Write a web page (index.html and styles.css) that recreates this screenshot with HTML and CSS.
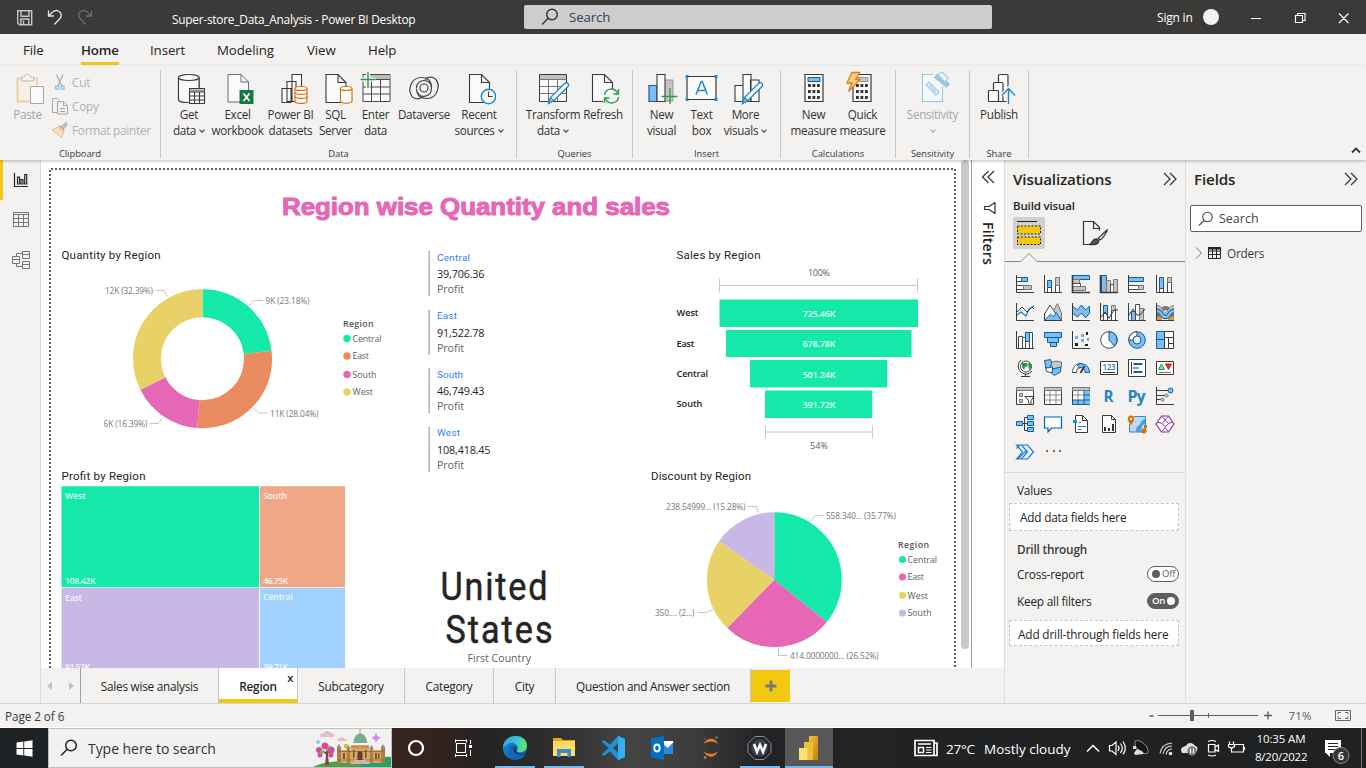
FILE: index.html
```html
<!DOCTYPE html>
<html lang="en">
<head>
<meta charset="utf-8">
<title>Super-store_Data_Analysis - Power BI Desktop</title>
<link rel="stylesheet" href="styles.css">
</head>
<body>
<div class="app">

<header class="titlebar">
  <svg class="quick" viewBox="0 0 110 34" width="110" height="34" fill="none" stroke="#fff">
    <g stroke="#c8c6c4" stroke-width="1.4"><path d="M17.700 10.700h14v14h-12.300l-1.700-1.700z"/><path d="M21 10.700v5.500h8v-5.500M20.800 24.500v-5.500h8v5.500M23.500 20.500v3.500"/></g>
    <path d="M48.500 10.500v5.500h5.500M48.700 15.800l4-3.800c3-2.400 6-1.700 7.600.5 1.700 2.500 1 4.800-1 6.800l-5 5.200" stroke="#e6e6e6" stroke-width="1.300"/>
    <path d="M91.500 10.500v5.500h-5.500M91.300 15.800l-4-3.800c-3-2.400-6-1.700-7.600.5-1.700 2.500-1 4.800 1 6.800l5 5.200" stroke="#6f6e6c" stroke-width="1.300"/>
  </svg>
  <div class="doc-title">Super-store_Data_Analysis - Power BI Desktop</div>
  <div class="top-search">
    <svg width="18" height="18" viewBox="0 0 18 18" fill="none" stroke="#333" stroke-width="1.400"><circle cx="11" cy="6.500" r="5.300"/><path d="M7.200 10.300L1 16.500"/></svg>
    <span>Search</span>
  </div>
  <div class="sign">Sign in</div>
  <div class="avatar"></div>
  <svg class="win" viewBox="1240 0 126 34" width="126" height="34" fill="none" stroke="#fff" stroke-width="1.100"><path d="M1251 18.500h10M1295.500 15.500h7v7h-7zM1297.500 15.500v-2h7.500v7h-2.500M1339 13.500l9.500 9.500M1348.500 13.500l-9.500 9.500"/></svg>
</header>

<nav class="menu">
  <span class="m-file">File</span><span class="m-home">Home</span><span class="m-insert">Insert</span><span class="m-model">Modeling</span><span class="m-view">View</span><span class="m-help">Help</span>
</nav>

<section class="ribbon">
  <div class="group g-clip">
    <div class="clip">
      <div class="btn off w-paste">
        <svg class="ico" viewBox="11 71 34 35"><g fill="none"><path d="M30 101.500H17.500v-23H37V85" stroke="#f0c896" stroke-width="1.600" fill="#f8f0e4"/><path d="M21.500 81v-4h3c.5-3.500 5.500-3.500 6 0h3v4z" stroke="#bbb9b7" fill="#f5f4f3"/><path d="M30.500 86.500h13v17h-13z" stroke="#a9a7a5" fill="#fafafa"/></g></svg>
        <span>Paste</span>
      </div>
      <ul class="clip-list">
        <li><svg viewBox="51 73 18 18"><g fill="none" stroke="#aeacaa" stroke-width="1.200"><path d="M56.500 74.500l5.500 12M63 74.500l-5.500 12"/></g><g fill="none" stroke="#98c4e0" stroke-width="1.500"><rect x="55.500" y="86" width="3" height="3"/><rect x="61" y="86" width="3" height="3"/></g></svg>Cut</li>
        <li><svg viewBox="51 97 18 18" fill="none" stroke="#a9a7a5"><path d="M57 112.500h-4.500v-14h5l2 2M57.500 101.500h6l4 4v8.500h-10zM63.500 101.500v4h4M60 108.500h5M60 111.500h5"/></svg>Copy</li>
        <li><svg viewBox="51 121 18 18"><path d="M52 130l6-3 6 5-3 5.500-2-2z" fill="#fadfc0" stroke="#e6b88e"/><path d="M59 125.500l5.500 5M61 127.500l5.500-5M62.500 129l5-5" stroke="#a9a7a5" fill="none" stroke-width="1.300"/></svg>Format painter</li>
      </ul>
    </div>
    <div class="glabel">Clipboard</div>
  </div>

  <div class="group g-data">
    <div class="btns">
      <div class="btn w48">
        <svg class="ico" viewBox="172 71 34 35" fill="#fafafa" stroke="#3b3a39" stroke-width="1.100"><path d="M178.500 77.500v22c0 1.800 4 3 10 3M199 88v-10.500"/><path d="M178.500 77.500v22c0 2 4 3 10 3h1V88h9.500V77.500" stroke="none"/><path d="M178.500 77.500v22c0 1.800 4 3 10 3M199 88v-10.500" fill="none"/><ellipse cx="188.800" cy="77.500" rx="10.300" ry="3"/><path d="M189.500 88.500h15v15h-15z"/><path d="M189.500 89.500h15v2h-15z" fill="#9a9896" stroke="none"/><path d="M189.500 92h15M189.500 96h15M189.500 100h15M194.500 92v11.500M199.500 92v11.500" fill="none"/></svg>
        <span>Get</span><span>data<i class="chev"></i></span></div>
      <div class="btn w49">
        <svg class="ico" viewBox="220.500 71 34 35"><path d="M227.500 74.500h13l7.500 7.500v20h-20.500z" fill="#fafafa" stroke="#6f6d6b"/><path d="M240.500 74.500v7.500h7.500" fill="none" stroke="#6f6d6b"/><path d="M239 90h14v14h-14z" fill="#107c41"/><path d="M243 93.500l6 7.500M249 93.500l-6 7.500" stroke="#fff" stroke-width="1.800"/></svg>
        <span>Excel</span><span>workbook</span></div>
      <div class="btn w57">
        <svg class="ico" viewBox="273.500 71 34 35" fill="#fafafa" stroke="#3b3a39" stroke-width="1.100"><path d="M291.500 74.500h9.500v27h-9.500zM286.500 81.500h9v20h-9zM281.500 88.500h9v14h-9z"/><path d="M294.500 88.500v13c0 2.500 12 2.500 12 0v-13" stroke="#d86c00"/><ellipse cx="300.500" cy="88.500" rx="6" ry="2" stroke="#d86c00"/><path d="M294.500 92.500c0 2.500 12 2.500 12 0M294.500 96.500c0 2.500 12 2.500 12 0" stroke="#d86c00" fill="none"/></svg>
        <span>Power BI</span><span>datasets</span></div>
      <div class="btn w33">
        <svg class="ico" viewBox="318.500 71 34 35" fill="#fafafa" stroke="#3b3a39" stroke-width="1.100"><path d="M325.500 74.500h12l8 8v20h-20zM337.500 74.500v8h8"/><path d="M340 88.500v12.500c0 3 11.500 3 11.500 0v-12.500" stroke="#d86c00"/><ellipse cx="345.700" cy="88.500" rx="5.800" ry="2" stroke="#d86c00"/></svg>
        <span>SQL</span><span>Server</span></div>
      <div class="btn w47">
        <svg class="ico" viewBox="358.500 71 34 35" fill="#fafafa" stroke="#4b4a49"><path d="M362.500 74.500h27v27h-27z"/><path d="M370 75h19.500v4h-19.500z" fill="#bdbbb9" stroke="none"/><path d="M362.500 87h27M362.500 94h27M371 79.500v22M380 79.500v22M370 79.500h19.500" fill="none"/><path d="M367.500 72v16M360 79.500h15" stroke="#f3f2f1" stroke-width="4"/><path d="M367.500 72v16M360 79.500h15" stroke="#2c9a4a" stroke-width="1.400"/></svg>
        <span>Enter</span><span>data</span></div>
      <div class="btn w50">
        <svg class="ico" viewBox="407 71 34 35" fill="none" stroke="#444" stroke-width="1.200"><ellipse cx="424" cy="88" rx="4" ry="4"/><path d="M416.500 88c0-10 15-10 15 0s-12 10.500-14 4M413 97.500c-6-6-3-19.500 8-20 6-.3 10.500 3 10.500 10M413 97.500c4 2 8 1 10-1"/><path d="M435 78.500c6 6 3 19.500-8 20-6 .3-10.500-3-10.500-10M435 78.500c-4-2-8-1-10 1"/></svg>
        <span>Dataverse</span></div>
      <div class="btn w60">
        <svg class="ico" viewBox="462 71 34 35" fill="#fafafa" stroke="#3b3a39" stroke-width="1.100"><path d="M469.500 74.500h12l8 8v20h-20zM481.500 74.500v8h8"/><circle cx="488.500" cy="96.500" r="7.200" stroke="#1f86cc" stroke-width="1.400"/><path d="M488.500 91.500v5h4" fill="none"/></svg>
        <span>Recent</span><span>sources<i class="chev"></i></span></div>
    </div>
    <div class="glabel">Data</div>
  </div>

  <div class="group g-query">
    <div class="btns">
      <div class="btn w54">
        <svg class="ico" viewBox="536 71 34 35" fill="#fafafa" stroke="#3b3a39"><path d="M539.500 74.500h27v27h-27z"/><path d="M540 75h26v4h-26z" fill="#c3c1bf" stroke="none"/><path d="M539.500 79.500h27M539.500 86.500h27M539.500 93.500h27M548.500 79.500v22M557.500 79.500v22" fill="none" stroke="#777"/><path d="M548.500 103.500l2-6 14-14c3-2 5 1 3.500 3l-14 14z" stroke="#1f86cc" stroke-width="1.300"/><path d="M548.500 103.500l2-6 3.500 3z" fill="#83bcea" stroke="#1f86cc"/></svg>
        <span>Transform</span><span>data<i class="chev"></i></span></div>
      <div class="btn w46">
        <svg class="ico" viewBox="586 71 34 35" fill="#fafafa" stroke="#3b3a39" stroke-width="1.100"><path d="M603 101.500h-10.500v-27h12l8 8v7M604.500 74.500v8h8"/><path d="M604.500 95c1-7 10-8 13-2M618.500 89v5h-5M618.500 97c-1 7-10 8-13 2M604.500 103v-5h5" fill="none" stroke="#2c9a4a" stroke-width="1.400"/></svg>
        <span>Refresh</span></div>
    </div>
    <div class="glabel">Queries</div>
  </div>

  <div class="group g-insert">
    <div class="btns">
      <div class="btn w41">
        <svg class="ico" viewBox="644.500 71 34 35"><path d="M664 80h8.500v21H664z" fill="#c8c6c4" stroke="#979593"/><path d="M648.500 85.500h8v16h-8z" fill="#83bcea" stroke="#0063b1" stroke-width="1.200"/><path d="M656.500 74.500h8v27h-8z" fill="#fafafa" stroke="#3b3a39" stroke-width="1.100"/><path d="M669.500 88v16M661 96.500h16" stroke="#2c9a4a" stroke-width="1.300"/></svg>
        <span>New</span><span>visual</span></div>
      <div class="btn w39">
        <svg class="ico" viewBox="684.500 71 34 35"><path d="M686.500 76.500h29v23h-29z" fill="#fafafa" stroke="#3b3a39" stroke-width="1.200"/><path d="M685 75h3v3h-3zM714 75h3v3h-3zM685 98h3v3h-3zM714 98h3v3h-3z" fill="#1490df"/><path d="M695.500 94.500l5.200-13h1l5.200 13M697.500 90.500h7.500" fill="none" stroke="#1f86cc" stroke-width="1.500"/></svg>
        <span>Text</span><span>box</span></div>
      <div class="btn w49">
        <svg class="ico" viewBox="728.500 71 34 35" fill="#fafafa" stroke="#3b3a39" stroke-width="1.100"><path d="M734.500 85.500h8v16h-8zM750 80h8.500v21.500H750zM742.500 74.500h8v27h-8z"/><path d="M742 103.500l2-6 14-14c3-2 5.500 1 3.500 3l-14 14z" stroke="#1f86cc" stroke-width="1.300"/><path d="M742 103.500l2-6 3.500 3z" fill="#83bcea" stroke="#1f86cc"/></svg>
        <span>More</span><span>visuals<i class="chev"></i></span></div>
    </div>
    <div class="glabel">Insert</div>
  </div>

  <div class="group g-calc">
    <div class="btns">
      <div class="btn w49">
        <svg class="ico" viewBox="796.500 71 34 35"><path d="M804.500 74.500h18v27h-18z" fill="#fafafa" stroke="#3b3a39" stroke-width="1.200"/><path d="M807.500 77.500h12v4h-12z" fill="#83bcea" stroke="#0063b1"/><path d="M807.500 85.500h12M807.500 91.500h12M807.500 97.500h12" stroke="#333" stroke-width="3" stroke-dasharray="2.800 1.700"/></svg>
        <span>New</span><span>measure</span></div>
      <div class="btn w49">
        <svg class="ico" viewBox="845.500 71 34 35"><path d="M852.500 74.500h18v27h-18z" fill="#fafafa" stroke="#3b3a39" stroke-width="1.200"/><path d="M857 77.500h10.500v4H857z" fill="#c8c6c4" stroke="#979593"/><path d="M855.500 85.500h12M855.500 91.500h12M855.500 97.500h12" stroke="#333" stroke-width="3" stroke-dasharray="2.800 1.700"/><path d="M851.500 72.500h7.500l-4 7h4.500l-11.500 12 3.500-8.500h-5z" fill="#ffd27a" stroke="#e07b1a" stroke-width="1.300"/></svg>
        <span>Quick</span><span>measure</span></div>
    </div>
    <div class="glabel">Calculations</div>
  </div>

  <div class="group g-sens">
    <div class="btns">
      <div class="btn off w73">
        <svg class="ico" viewBox="915 71 34 35" fill="none" stroke="#9cc7e2" stroke-width="1.100"><path d="M932 74.500h-10.500v27h20v-15" fill="#f3f8fb"/><path d="M925 85l3-3 10 10-3 3zM928 85l7 7" /><path d="M933.500 77.500l3-3.500 12 10-3 3z" fill="#9cc7e2"/><path d="M937 75l4-3 6 6-3 4z" fill="#f3f8fb"/></svg>
        <span>Sensitivity</span><span><i class="chev solo"></i></span></div>
    </div>
    <div class="glabel">Sensitivity</div>
  </div>

  <div class="group g-share">
    <div class="btns">
      <div class="btn w58">
        <svg class="ico" viewBox="982 71 34 35" fill="#fafafa" stroke="#3b3a39" stroke-width="1.200"><path d="M998.500 101.500V75.500q0-1 1-1h7.500q1 0 1 1V101.500z"/><path d="M993.500 101.500V83.500q0-1 1-1h7.500q1 0 1 1V101.500z"/><path d="M988.500 100.500V91.500q0-1 1-1h8q1 0 1 1V101.500h-9q-1 0-1-1"/><path d="M1008.500 104V89M1002 95.500l6.500-7 6.500 7" fill="none" stroke="#f3f2f1" stroke-width="4"/><path d="M1008.500 104V89M1002 95.500l6.500-7 6.500 7" fill="none" stroke="#1f86cc" stroke-width="1.400"/></svg>
        <span>Publish</span></div>
    </div>
    <div class="glabel">Share</div>
  </div>
  <svg class="collapse" width="10" height="7" viewBox="0 0 10 7"><path d="M1 5.500l4-4 4 4" fill="none" stroke="#333" stroke-width="1.800"/></svg>
</section>

<main class="main">
  <aside class="rail">
    <svg width="41" height="125" viewBox="0 160 41 125" fill="none">
      <path d="M0 160h3v40H0z" fill="#f2c811"/>
      <path d="M14.500 173v13.500H28M17.500 177h2v7h-2zM21 179.500h2v4.500h-2zM24.700 174.500h2v9.500h-2z" stroke="#252423" stroke-width="1.200"/>
      <path d="M13.500 212.500h15v14h-15zM13.500 214.500h15M13.500 218.500h15M13.500 222.500h15M18.500 214.500v12M23.500 214.500v12" stroke="#777573"/>
      <path d="M12.500 256.500h7v7h-7zM12.500 259.500h7M22.500 251.500h7v7h-7zM22.500 254.500h7M22.500 261.500h7v7h-7zM22.500 264.500h7M16.500 256.500v-3h6M16.500 263.500v3h6" stroke="#777573"/>
    </svg>
  </aside>

  <div class="stage">
    <div class="stage-top">
      <div class="canvas">
        <svg class="report" width="920" height="508" viewBox="41 160 920 508">
          <path d="M50 668V169H955V668" fill="none" stroke="#605e5c" stroke-width="2" stroke-dasharray="2 2"/>
          <text class="headline" x="282" y="215" textLength="388" lengthAdjust="spacingAndGlyphs">Region wise Quantity and sales</text>

          <g class="v-title">
            <text x="61.500" y="259" textLength="99">Quantity by Region</text>
            <text x="676.500" y="259" textLength="84">Sales by Region</text>
            <text x="61.500" y="480" textLength="84">Profit by Region</text>
            <text x="651" y="480" textLength="100">Discount by Region</text>
          </g>

          <g transform="rotate(-90 202.500 358.700)" fill="none" stroke-width="28">
            <circle cx="202.500" cy="358.700" r="55.500" pathLength="100" stroke="#15e9aa" stroke-dasharray="23.18 100"/>
            <circle cx="202.500" cy="358.700" r="55.500" pathLength="100" stroke="#ea8a5f" stroke-dasharray="28.04 100" stroke-dashoffset="-23.18"/>
            <circle cx="202.500" cy="358.700" r="55.500" pathLength="100" stroke="#e667b6" stroke-dasharray="16.39 100" stroke-dashoffset="-51.22"/>
            <circle cx="202.500" cy="358.700" r="55.500" pathLength="100" stroke="#e8d166" stroke-dasharray="32.39 100" stroke-dashoffset="-67.61"/>
          </g>
          <path class="lead" d="M156 290.500h8l3.500 6M249.500 305.500l4.500-5h9M253.500 408l5 5h9M150 423.500h8.500l4-6"/>
          <g class="detail">
            <text x="105" y="294" textLength="48">12K (32.39%)</text>
            <text x="265.500" y="304" textLength="44">9K (23.18%)</text>
            <text x="270" y="417" textLength="48.500">11K (28.04%)</text>
            <text x="103.500" y="427" textLength="44">6K (16.39%)</text>
          </g>
          <g class="legend">
            <text class="lt" x="343" y="327" textLength="30.500">Region</text>
            <circle cx="347" cy="338.500" r="3.700" fill="#15e9aa"/><text x="352.500" y="342" textLength="29">Central</text>
            <circle cx="347" cy="356" r="3.700" fill="#ea8a5f"/><text x="352.500" y="359" textLength="16.500">East</text>
            <circle cx="347" cy="374.500" r="3.700" fill="#e667b6"/><text x="352.500" y="378" textLength="24">South</text>
            <circle cx="347" cy="392" r="3.700" fill="#e8d166"/><text x="352.500" y="395" textLength="20.500">West</text>
          </g>

          <path d="M429.200 251v45M429.200 310v45M429.200 368v45M429.200 427v45" stroke="#b5b5b5" stroke-width="1.600"/>
          <g class="c-name"><text x="437" y="261" textLength="33">Central</text><text x="437" y="319" textLength="20">East</text><text x="437" y="378" textLength="26">South</text><text x="437" y="436" textLength="23">West</text></g>
          <g class="c-val"><text x="437" y="278" textLength="47.500">39,706.36</text><text x="437" y="337" textLength="47.500">91,522.78</text><text x="437" y="395" textLength="47.500">46,749.43</text><text x="437" y="454" textLength="53.500">108,418.45</text></g>
          <g class="c-sub"><text x="437" y="293" textLength="27">Profit</text><text x="437" y="352" textLength="27">Profit</text><text x="437" y="410" textLength="27">Profit</text><text x="437" y="469" textLength="27">Profit</text></g>

          <g class="f-pct"><text x="808" y="276" textLength="22">100%</text><text x="810" y="449" textLength="18">54%</text></g>
          <path d="M719.500 278.500v14M917.500 278.500v14M719.500 285.500h198M765.500 425.500v13M872.500 425.500v13M765.500 432h107" stroke="#c8c8c8" fill="none"/>
          <g fill="#15e9aa"><rect x="719.500" y="299.500" width="198.500" height="27.500"/><rect x="726" y="330" width="185.500" height="27"/><rect x="750" y="360" width="137.200" height="27.500"/><rect x="765" y="390.500" width="107.200" height="27.500"/></g>
          <g class="f-name"><text x="676.500" y="316" textLength="22">West</text><text x="676.500" y="347" textLength="18">East</text><text x="676.500" y="377" textLength="31.500">Central</text><text x="676.500" y="407" textLength="26">South</text></g>
          <g class="f-val"><text x="802.500" y="317" textLength="33">725.46K</text><text x="802.500" y="347" textLength="33">678.78K</text><text x="802.500" y="378" textLength="33">501.24K</text><text x="802.500" y="408" textLength="33">391.72K</text></g>

          <g><path d="M61.500 486.300h197.500v101H61.500z" fill="#15e9aa"/><path d="M260 486.300h85v101h-85z" fill="#efa787"/><path d="M61.500 588h197.500v90H61.500z" fill="#c7b8e6"/><path d="M260 588h85v90h-85z" fill="#a0d1ff"/></g>
          <g class="t-lab"><text x="65" y="499" textLength="21">West</text><text x="263" y="499" textLength="24">South</text><text x="65" y="601" textLength="17">East</text><text x="263" y="600" textLength="30">Central</text><text x="65" y="584" textLength="30.500">108.42K</text><text x="263" y="584" textLength="25">46.75K</text><text x="65" y="670" textLength="25">91.52K</text><text x="263" y="670" textLength="25">39.71K</text></g>

          <g class="big"><text transform="translate(440.500 600) scale(.9 1)" textLength="119">United</text><text transform="translate(445.500 643) scale(.9 1)" textLength="119">States</text></g>
          <text class="big-sub" x="467.500" y="662" textLength="63.500">First Country</text>

          <g transform="rotate(-90 774.300 579.700)" fill="none" stroke-width="67.400">
            <circle cx="774.300" cy="579.700" r="33.700" pathLength="100" stroke="#15e9aa" stroke-dasharray="35.77 100"/>
            <circle cx="774.300" cy="579.700" r="33.700" pathLength="100" stroke="#e667b6" stroke-dasharray="26.52 100" stroke-dashoffset="-35.77"/>
            <circle cx="774.300" cy="579.700" r="33.700" pathLength="100" stroke="#e8d166" stroke-dasharray="22.43 100" stroke-dashoffset="-62.29"/>
            <circle cx="774.300" cy="579.700" r="33.700" pathLength="100" stroke="#c7b8e6" stroke-dasharray="15.28 100" stroke-dashoffset="-84.72"/>
          </g>
          <path class="lead" d="M747.500 506.500h9l1.500 6M811 521.500l4-6h8.500M697.500 612.500h8.500l7-3M778.500 648.500v7h9"/>
          <g class="detail">
            <text x="666" y="510" textLength="79.500">238.54999... (15.28%)</text>
            <text x="826" y="519" textLength="70">558.340... (35.77%)</text>
            <text x="655" y="616" textLength="39.500">350.... (2...)</text>
            <text x="790" y="659" textLength="88.500">414.0000000... (26.52%)</text>
          </g>
          <g class="legend">
            <text class="lt" x="898" y="548" textLength="31">Region</text>
            <circle cx="902.500" cy="559.500" r="3.600" fill="#15e9aa"/><text x="907.500" y="563" textLength="29.500">Central</text>
            <circle cx="902.500" cy="577" r="3.600" fill="#e667b6"/><text x="907.500" y="580" textLength="16.500">East</text>
            <circle cx="902.500" cy="595.300" r="3.600" fill="#e8d166"/><text x="907.500" y="599" textLength="20.500">West</text>
            <circle cx="902.500" cy="613" r="3.600" fill="#c7b8e6"/><text x="907.500" y="616" textLength="24">South</text>
          </g>
        </svg>
        <div class="scroll"><div class="thumb"></div></div>
      </div>
      <aside class="filters">
        <svg width="16" height="56" viewBox="0 0 16 56" fill="none" stroke="#333" stroke-width="1.200"><path d="M8.500 11l-6 6 6 6M14 11l-6 6 6 6"/><path d="M15 42.500v11l-6-4H4.500v-3H9z" stroke-linejoin="round"/></svg>
        <div class="f-title">Filters</div>
      </aside>
    </div>
    <div class="tabs">
      <div class="arrows"><i class="al"></i><i class="ar"></i></div>
      <div class="tab t1">Sales wise analysis</div>
      <div class="tab t2 active">Region<b>x</b></div>
      <div class="tab t3">Subcategory</div>
      <div class="tab t4">Category</div>
      <div class="tab t5">City</div>
      <div class="tab t6">Question and Answer section</div>
      <div class="add"><svg width="12" height="12" viewBox="0 0 12 12"><path d="M6 .5v11M.5 6h11" stroke="#7a7778" stroke-width="3"/></svg></div>
    </div>
  </div>

  <aside class="viz">
    <div class="pane-head"><span>Visualizations</span><svg width="14" height="14" viewBox="0 0 14 14" fill="none" stroke="#333" stroke-width="1.200"><path d="M1 1l6 6-6 6M7 1l6 6-6 6"/></svg></div>
    <div class="build">Build visual</div>
    <div class="modes">
      <div class="mode on"><svg width="32" height="32" viewBox="1013 217 32 32"><path d="M1017 221.500h20" stroke="#222"/><path d="M1017.500 226h23v8h-23zM1017.500 237h23v7.500h-23z" fill="#f2c811" stroke="#222" stroke-dasharray="2 1.500"/></svg></div>
      <div class="mode"><svg width="32" height="32" viewBox="1077 217 32 32" fill="none" stroke="#333" stroke-width="1.200"><path d="M1089 244.500h-5.500v-23h10l6 6v3M1093.500 221.500v7h6"/><path d="M1107 230l-8.500 8 1.500 2c3-2 5-5 7-9z" fill="#fff"/><path d="M1089 244.500c4-1 3-5 6-5.500s5 2 3 4-5 2-9 1.500z" fill="#555"/></svg></div>
    </div>
    <svg class="notch" width="180" height="9" viewBox="0 0 180 9" fill="none" stroke="#8a8886"><path d="M0 8.500h16l8-8 8 8h148"/></svg>
    <div class="icons">
      <!-- bar and column charts -->
      <svg viewBox="0 0 18 18"><path class="w" d="M.5 2.500h5v4h-5zM.500 10.500h7v4h-7z"/><path class="b" d="M5.500 2.500h6v4h-6z"/><path class="g" d="M7.500 10.500h8v4h-8z"/><path class="a" d="M.500 0v17.500H18"/></svg>
      <svg viewBox="0 0 18 18"><path class="w" d="M3.500 12.500h4v5h-4zM11.500 10.500h4v7h-4z"/><path class="b" d="M3.500 5.500h4v7h-4z"/><path class="g" d="M11.500 2.500h4v8h-4z"/><path class="a" d="M.500 0v17.500H18"/></svg>
      <svg viewBox="0 0 18 18"><path class="b" d="M.500 .500h17v4h-17z"/><path class="g" d="M.500 4.500h7v4h-7z"/><path class="w" d="M.500 8.500h8v3h-8z"/><path class="g" d="M.500 11.500h13v4h-13z"/><path class="a" d="M.500 0v17.500H18" stroke-width="1.600"/></svg>
      <svg viewBox="0 0 18 18"><path class="b" d="M1.500 .500h5v17h-5z"/><path class="g" d="M6.500 5.500h4v12h-4z"/><path class="w" d="M10.500 9.500h3v8h-3z"/><path class="g" d="M13.500 4.500h4v13h-4z"/><path class="a" d="M.500 0v17.500H18" stroke-width="1.600"/></svg>
      <svg viewBox="0 0 18 18"><path class="b" d="M.500 2.500h15v4h-15z"/><path class="w" d="M.500 10.500h10v4h-10z"/><path class="g" d="M10.500 10.500h5v4h-5z"/><path class="a" d="M.500 0v17.500H18"/></svg>
      <svg viewBox="0 0 18 18"><path class="w" d="M3.500 13.500h4v4h-4zM11.500 7.500h4v10h-4z"/><path class="b" d="M3.500 2.500h4v11h-4z"/><path class="g" d="M11.500 2.500h4v5h-4z"/><path class="a" d="M.500 0v17.500H18"/></svg>
      <!-- line, area and combo charts -->
      <svg viewBox="0 0 18 18"><path class="bl" d="M1 12l4-3 5 4 3-7 5-3"/><path class="a" d="M1 9l5-5 5 5 5-5 2 2"/><path class="a" d="M.500 0v17.500H18"/></svg>
      <svg viewBox="0 0 18 18"><path class="g" d="M8 10l5.500-9.500L17.500 10v7.500H8z"/><path class="w" d="M.500 11L6 2l6 9v6.500H.500z"/><path class="b" d="M.500 17.500L6.500 11l3 3 2.500-4.500 5.500 8z"/><path class="a" d="M.500 10v7.500H18"/></svg>
      <svg viewBox="0 0 18 18"><path class="b" d="M.500 3l5 4 4-5 4 5 4-4v7l-4 5-4-5-4 4-5-4z"/><path class="a" d="M.500 0v17.500H18"/></svg>
      <svg viewBox="0 0 18 18"><path class="b" d="M3.500 2.500h4v8h-4z"/><path class="w" d="M3.500 10.500h4v7h-4zM11.500 7h4v10.500h-4z"/><path class="g" d="M11.500 2.500h4v5h-4z"/><path class="a" d="M1 14l4-5 4 6 5-8h4M.500 0v17.500H18"/></svg>
      <svg viewBox="0 0 18 18"><path class="b" d="M3.500 8.500h4v9h-4z"/><path class="w" d="M7.500 1.500h4v16h-4z"/><path class="g" d="M11.500 5.500h4v12h-4z"/><path class="a" d="M1 12l4-6 4 6h3l5-6M.500 0v17.500H18"/></svg>
      <svg viewBox="0 0 18 18"><path fill="#e8912d" d="M1 11h5v6H1zM12 11h6v6h-6z"/><path d="M1 12c5 0 4-7 8.500-7s3.500 7 8.500 7M1 4c5 0 4 7 8.500 7S13 4 18 4" fill="none" stroke="#797775" stroke-width="4"/><path d="M1 4c5 0 4 7 8.500 7S13 4 18 4" fill="none" stroke="#c8c6c4" stroke-width="2.500"/><path d="M1 8c5 0 4 6 8.500 6S13 8 18 8" fill="none" stroke="#0063b1" stroke-width="4.500"/><path d="M1 8c5 0 4 6 8.500 6S13 8 18 8" fill="none" stroke="#83bcea" stroke-width="2.700"/><path class="a" d="M.500 0v17.500H18"/></svg>
      <!-- waterfall, funnel, scatter, pie, donut, treemap -->
      <svg viewBox="0 0 18 18"><path class="w" d="M2.500 5.500h4v12h-4zM6.500 6.500h3v11h-3zM13.500 1.500h3v16h-3z"/><path class="b" d="M9.500 1.500h4v9h-4z"/><path class="a" d="M.500 0v17.500H18"/></svg>
      <svg viewBox="0 0 18 18"><path class="b" d="M.500 1.500h17v5h-17zM3.500 6.500h11v5h-11zM6.500 11.500h6v4h-6z"/></svg>
      <svg viewBox="0 0 18 18"><path fill="#6db0ea" d="M9 3h3v3H9zM3 5h3v3H3zM9 8h3v3H9zM15 7h2v3h-2z"/><path fill="#222" d="M14 1h2v3h-2zM3 12h3v3H3zM13 13h3v2h-3z"/><path class="a" d="M.500 0v17.500H18"/></svg>
      <svg viewBox="0 0 18 18"><circle class="w" cx="9" cy="9" r="8.300"/><path class="b" d="M9 9V.700A8.300 8.300 0 0 1 14.500 15z"/></svg>
      <svg viewBox="0 0 18 18"><circle class="b" cx="9" cy="9" r="8.300"/><path class="w" d="M.700 9A8.300 8.300 0 0 1 9 .700V5A4 4 0 0 0 5 9z"/><circle cx="9" cy="9" r="4" fill="#f3f2f1" stroke="#0063b1"/></svg>
      <svg viewBox="0 0 18 18"><path class="b" d="M.500 .500h8v8h-8zM.500 8.500h8v9h-8z"/><path class="a wf" d="M8.500 .500h9v6h-9zM8.500 6.500h4v11h-4zM12.500 6.500h5v6h-5zM12.500 12.500h5v5h-5z"/></svg>
      <!-- maps, gauge, cards -->
      <svg viewBox="0 0 18 18"><circle class="w" cx="10" cy="7.500" r="5.500"/><path fill="#2c9a4a" d="M6 4h5l1 3-3 1-1 3-2-3zM12 4h3v5l-2 2z"/><path class="a" d="M5 1C0 5 2 14 9 15c4 .500 6-2 7-3M9.500 15v2.500M5 17.500h9"/></svg>
      <svg viewBox="0 0 18 18"><path class="g" d="M6.500 3.500L12 2l5.500 1v5l-4 2-7-1z"/><path class="w" d="M1.500 8h7v6l-6-1.500z"/><path class="b" d="M.500 1.500L6.500 .500l1 3-1 5-4.500.5zM8.500 10l8.500-2-.5 5-6.500 3.500-2-2z"/></svg>
      <svg viewBox="0 0 18 18"><path class="w" d="M.500 13.500C.500 8 4 4.500 9 4.500v4c-3 0-4.500 2-4.500 5z"/><path class="b" d="M5.500 5.500C11 3 17.500 6.500 17.500 13.500H13c0-3-1.500-5-4-5-1 0-1.500.2-2 .5z"/><path class="a" d="M8.500 14l4-7" stroke-width="1.800"/></svg>
      <svg viewBox="0 0 18 18"><path class="a wf" d="M.500 2.500h17v13H.500z"/><text class="n123" x="2.500" y="11" textLength="13">123</text><path class="a" d="M3 13.500h12"/></svg>
      <svg viewBox="0 0 18 18"><path class="a wf" d="M.500 .500h17v17H.500z"/><path d="M5.500 5h9M5.500 13h9" stroke="#0063b1" stroke-width="2.200"/><path class="a" d="M3.500 3v12M5 9h6"/></svg>
      <svg viewBox="0 0 18 18"><path class="a wf" d="M.500 2.500h17v13H.500z"/><path d="M2.500 10.500l3-5.500 3 5.500z" fill="#9ad29f" stroke="#2c9a4a"/><path d="M9.500 5h6l-3 5.500z" fill="#e33" stroke="#c22"/><path class="a" d="M3 13.500h12" stroke-width=".7"/></svg>
      <!-- slicer, table, matrix, scripts -->
      <svg viewBox="0 0 18 18"><path class="a wf" d="M.500 1.500h17v16H.500z"/><path class="g" d="M.500 .500h17v3h-17zM3.500 6.500h3v3h-3zM3.500 12.500h3v3h-3z"/><path class="a wf" d="M9 9.500h9l-3 4v4.500l-2.500-2v-2.500z"/></svg>
      <svg viewBox="0 0 18 18"><path class="a wf" d="M.500 .500h17v17H.500z"/><path class="g" d="M.500 .500h17v3h-17z"/><path class="gl" d="M1 8h16.500M1 13h16.500M6 4v13M12 4v13"/></svg>
      <svg viewBox="0 0 18 18"><path class="a wf" d="M.500 .500h17v17H.500z"/><path class="g" d="M.500 .500h17v3h-17z"/><path fill="#83bcea" d="M12 4h6v14H1v-5h11z"/><path d="M12 4v13M6 13v5M1 13h17M12 8h6M.500 17.500h17" stroke="#0063b1" fill="none"/><path class="gl" d="M1 8h11M6 4v9"/></svg>
      <svg viewBox="0 0 18 18"><text class="scr" x="3.500" y="15" textLength="10" lengthAdjust="spacingAndGlyphs">R</text></svg>
      <svg viewBox="0 0 18 18"><text class="scr" x="-.5" y="15" textLength="18">Py</text></svg>
      <svg viewBox="0 0 18 18"><path class="a" d="M.500 0v17.500H18M1 3.500h11M1 8.500h8M1 12.500h4"/><circle class="b" cx="14.500" cy="3.500" r="2.500"/><circle class="g" cx="10.500" cy="8.500" r="1.600"/><circle class="g" cx="6.500" cy="12.500" r="1.600"/></svg>
      <!-- decomposition tree, Q&A, narrative, reports, ArcGIS, apps -->
      <svg viewBox="0 0 18 18"><path class="a" d="M6 8.500h5M8.500 2.500v13M8.500 2.500h3M8.500 15.500h3"/><path class="b" d="M.500 6.500h6v4h-6zM11.500 .500h6v4h-6zM11.500 6.500h6v4h-6zM11.500 12.500h6v4h-6z"/></svg>
      <svg viewBox="0 0 18 18"><path d="M.500 2h17v11H7.500L4 17v-4H.500z" fill="#fff" stroke="#0063b1" stroke-width="1.200"/></svg>
      <svg viewBox="0 0 18 18"><path class="a wf" d="M3.500 .500h7l5 5v12h-12zM10.500 .500v5h5"/><path fill="#1b8fe0" d="M1 5h4v3H1z"/><path class="bl" d="M7 7.500h2M6 11.500h8M6 14.500h3"/></svg>
      <svg viewBox="0 0 18 18"><path class="a wf" d="M2.500 .500h9l4 4v13h-13zM11.500 .500v4h4"/><path fill="#333" d="M4 12h2v4H4zM8 13h2v3H8zM12 9h2v7h-2z"/></svg>
      <svg viewBox="0 0 18 18"><path fill="#b8dcf2" stroke="#1b8fe0" d="M1.500 1.500h16v15.500h-16z"/><path fill="#4aa0d8" d="M8 17c0-5 1-5 3-7 2-1 1-4 6-6v5c-4 1-3 4-4 8z"/><path fill="#d86c00" stroke="#f3f2f1" stroke-width=".6" d="M3 11C-.500 6-1 4 0 2c1-2.500 5-2.500 6 0 1 2 .500 4-3 9z"/><circle cx="3" cy="4" r="1.300" fill="#fff"/><path fill="#d86c00" d="M16 10h3v3h-3z"/><circle cx="16" cy="16" r="2.500" fill="#d86c00"/></svg>
      <svg viewBox="0 0 18 18"><path d="M5.500 1h7L18 9l-5.500 8h-7L0 9z" fill="#fbf5fc" stroke="#8a3a9c" stroke-width="1.200"/><path d="M5.500 1l7 7.500-3 3.500-3.500-3.500L12.500 1M5.500 17L9 12.500l3.500 4.500M2 7l4 1.500M16 7l-3.500 1.500" fill="none" stroke="#8a3a9c"/></svg>
      <svg viewBox="0 0 18 18"><path d="M.500 2h5l6 7-6 7h-5l6-7zM5.500 2h6l6 7-6 7h-6M.500 5.500l3-3M2 16l9-9" fill="#e9f4fc" stroke="#1b7fd4" stroke-width="1.200"/></svg>
      <svg viewBox="0 0 18 18"><path d="M2 8h2M9 8h2M15 8h2" stroke="#7d6a50" stroke-width="1.800"/></svg>
    </div>
    <div class="wells">
      <div class="lab l-values">Values</div>
      <div class="drop d1">Add data fields here</div>
      <div class="lab l-drill">Drill through</div>
      <div class="row r1"><span>Cross-report</span><span class="toggle">Off</span></div>
      <div class="row r2"><span>Keep all filters</span><span class="toggle on">On</span></div>
      <div class="drop d2">Add drill-through fields here</div>
    </div>
  </aside>

  <aside class="fields">
    <div class="pane-head"><span>Fields</span><svg width="14" height="14" viewBox="0 0 14 14" fill="none" stroke="#333" stroke-width="1.200"><path d="M1 1l6 6-6 6M7 1l6 6-6 6"/></svg></div>
    <div class="fsearch"><svg width="16" height="16" viewBox="0 0 16 16" fill="none" stroke="#444" stroke-width="1.100"><circle cx="9.500" cy="6" r="4.700"/><path d="M6 9.500L1 14.500"/></svg><span>Search</span></div>
    <div class="orders"><svg width="28" height="14" viewBox="0 0 28 14" fill="none"><path d="M1 1.500l5.500 5.500L1 12.500" stroke="#777"/><path d="M13.500 1.500h12v11h-12zM13.500 5h12M13.500 8.500h12M17.500 3v9.500M21.500 3v9.500" stroke="#252423"/><path d="M13 1.500h13v2H13z" fill="#252423"/></svg><span>Orders</span></div>
  </aside>
</main>

<footer class="status">
  <span class="page">Page 2 of 6</span>
  <svg width="226" height="24" viewBox="1140 704 226 24" fill="none" stroke="#605e5c"><path d="M1149.500 716h4" stroke-width="1.500"/><path d="M1158 715.500h100M1208.500 713v5"/><path d="M1190 710h4v11h-4z" fill="#605e5c" stroke="none"/><path d="M1264 715.500h8M1268 711.500v8" stroke-width="1.400"/><text x="1288.500" y="720" textLength="23" class="zoomtxt">71%</text><path d="M1335.500 710.500h15v10h-15z" stroke="#7a5a8a"/><path d="M1338 714.500v-2h3M1345 712.500h3v2M1338 716.500v2h3M1345 718.500h3v-2" stroke="#3a8a58"/></svg>
</footer>

<footer class="taskbar">
  <div class="start"><svg width="17" height="17" viewBox="0 0 17 17"><path fill="#fff" d="M.500 2.500L7.300 1.600V8H.500zM8.200 1.400L16.500 .300V8H8.200zM.500 9H7.300v6.400L.500 14.500zM8.200 9h8.300v7.700L8.200 15.600z"/></svg></div>
  <div class="tsearch">
    <svg width="18" height="18" viewBox="0 0 18 18" fill="none" stroke="#222" stroke-width="1.500"><circle cx="11" cy="6.500" r="5.300"/><path d="M7.200 10.300L1 16.500"/></svg>
    <span>Type here to search</span>
    <svg class="palace" width="78" height="38" viewBox="314 729 78 38">
      <path d="M314 767c10-5 22-6 38-6 18-3 30-5 40-4v11h-78z" fill="#4f9f4a"/><path d="M358 767c12-5 24-9 34-10v11h-34z" fill="#27a06a"/>
      <path d="M322 737c-2-3 1-4 3-4 2-3 6-2 7 0 4 0 4 4 2 4zM338 741c0-2 2-3 3-3 2-2 4 0 5 1 2 0 2 2 1 2z" fill="#e3c0c6"/>
      <circle cx="319" cy="742" r="2" fill="#6fdbe6"/><circle cx="347" cy="746" r="2.200" fill="#f5b400"/><path d="M377 733l1.500 3 3.500 2-3.500 1.500-1.500 3.500-1.500-3.500-3-1.500 3-2z" fill="#d98af0"/>
      <path d="M326 765l1-10-4-5 4 2 1-4 1 4 5-3-5 5 1 11z" fill="#7a4a35"/><g fill="#cf4f9e"><circle cx="320" cy="750" r="3"/><circle cx="326" cy="746" r="3.500"/><circle cx="332" cy="750" r="3.500"/><circle cx="321" cy="755" r="2.500"/><circle cx="332" cy="755" r="2.500"/></g><g fill="#8bb04f"><circle cx="323" cy="752" r="2"/><circle cx="330" cy="747" r="1.500"/></g>
      <path d="M338 750h48v13h-48zM352 745h18v18h-18z" fill="#d7a765"/><path d="M338 747h4v16h-4zM348 749h3v14h-3zM371 749h3v14h-3zM382 747h4v16h-4z" fill="#b07c42"/><path d="M354.500 743c0-7 4-9 6.500-10 3 1 7 3 7 10z" fill="#77ab93"/><path d="M337.500 748l2.500-4 2.500 4zM347 749l2.500-4 2.500 4zM370 749l2.500-4 2.500 4zM381.500 748l2.500-4 2.500 4z" fill="#7f9f79"/><path d="M361 733v-4" stroke="#c9a050"/>
      <path d="M338 751.500h48M352 747h18M338 760h48" stroke="#96683c" stroke-width=".8"/>
      <path d="M358.500 761v-7c0-4 5-4 5 0v7z" fill="#5f4028"/><path d="M344 753h2v6h-2zM354 750h1.500v8H354zM366 750h1.500v8H366zM376 753h2v6h-2zM379 753h1.500v6H379z" fill="#7a5435"/><path d="M351 764l4-4h12l4 4z" fill="#c9b6a8"/>
    </svg>
  </div>
  <svg class="tasks" width="974" height="40" viewBox="392 728 974 40">
    <defs>
      <linearGradient id="edge" x1="0" y1="0" x2="1" y2=".3"><stop offset="0" stop-color="#2ba5e0"/><stop offset=".6" stop-color="#38c6cf"/><stop offset="1" stop-color="#5fe07b"/></linearGradient>
      <linearGradient id="edgeb" x1="0" y1="0" x2="1" y2="1"><stop offset="0" stop-color="#1f8fdc"/><stop offset="1" stop-color="#0c51a0"/></linearGradient>
      <linearGradient id="pbi" x1="0" y1="0" x2="1" y2="1"><stop offset="0" stop-color="#f0c040"/><stop offset="1" stop-color="#c87d0a"/></linearGradient>
    </defs>
    <circle cx="416" cy="748" r="7" fill="none" stroke="#fff" stroke-width="2.200"/>
    <path d="M456.500 743.500h9v9h-9zM455.500 740.500h11M455.500 755.500h11M455.500 739.500v3M466.500 739.500v3M455.500 757v-3M466.500 757v-3M470.500 740v4M470.500 750v6M470.500 745v3" fill="none" stroke="#fff" stroke-width="1.100"/><path d="M469 745h3v3h-3z" fill="#fff"/>
    <path d="M785 728h48v40h-48z" fill="#56585a"/>
    <path d="M495 766h40v2h-40zM544 766h40v2h-40zM740 766h40v2h-40zM785 766h48v2h-48z" fill="#76b9ed"/>
    <!-- Edge -->
    <circle cx="515" cy="748" r="12" fill="url(#edgeb)"/><path d="M503 748c0-15 24-16 24-2 0 5-5 7-9 6-2-1 0-2 0-4 0-4-6-7-10-4-3 1-4 3-5 4z" fill="url(#edge)"/><path d="M511 745c-4 5-1 13 7 14 3 0 6-2 7-4-5 3-12-1-10-7-1-1-2-3-4-3z" fill="#1664b5"/><path d="M516 746c-2 5 1 8 6 8 2 0 4-1 5-2 0 3-11 4-13-1-1-2 0-4 2-5z" fill="#262626"/>
    <!-- Explorer -->
    <path d="M553 738h8l2 2h12v16h-22z" fill="#e8a500"/><path d="M553 741h22v15h-22z" fill="#ffd966"/><path d="M557 749h14v8h-3.500v-4h-7v4H557z" fill="#2f8fd8"/>
    <!-- VS Code -->
    <path d="M618 736l7 3v18l-7 3-8-8.500-6 4.500-2.500-1.500 7-6.500-7-6.500 2.500-1.500 6 4.500zM618 743.500l-5 4.500 5 4.500z" fill="#1f8fd8" fill-rule="evenodd"/><path d="M618 736l7 3v18l-7 3z" fill="#38aef2"/>
    <!-- Outlook -->
    <path d="M662 741h11v13h-11z" fill="#fff"/><path d="M662 742l5.500 5 5.500-5v12h-11z" fill="#2a8bd6"/><path d="M662 741.500l5.500 5 5.500-5" fill="none" stroke="#fff" stroke-width="1.800"/><path d="M651 738.500l13-2.500v24l-13-2.500z" fill="#0072c6"/><ellipse cx="657" cy="748" rx="2.700" ry="3.500" fill="none" stroke="#fff" stroke-width="1.800"/>
    <!-- Jupyter -->
    <path d="M703.500 744c3-7 12-7 14.500 0-4-3.500-10.500-3.500-14.500 0zM703.500 751c3 7.500 12 7.500 14.500 0-4 3.800-10.500 3.800-14.500 0z" fill="#f37726"/><circle cx="716.500" cy="737.500" r="1.200" fill="#777"/><circle cx="705" cy="757.500" r="1.400" fill="#888"/><circle cx="704.500" cy="739" r=".8" fill="#777"/>
    <!-- octagonal badge -->
    <path d="M755 736.500h9l7 7v9l-7 7h-9l-7-7v-9z" fill="#23262d" stroke="#888c94"/><circle cx="759.500" cy="748" r="8.500" fill="#3d4048"/><path d="M754 744l3 8 3-7 3 7 3-8" fill="none" stroke="#fff" stroke-width="2.500"/>
    <!-- Power BI -->
    <path d="M809 736h9v24h-9z" fill="url(#pbi)"/><path d="M804 742h9v18h-9z" fill="#efc030"/><path d="M799 748h8.500v12H799z" fill="#ffe070"/>
    <!-- weather -->
    <path d="M915 740.500h19v15h-19zM934 743h3v12.500h-4M918 744h13" fill="none" stroke="#fff" stroke-width="1.700"/><path d="M918.500 747.500h5v5h-5z" fill="none" stroke="#fff" stroke-width="1.500"/><path d="M926 747.500h5.500M926 750h5.500M926 752.500h5.500" stroke="#fff" stroke-width="1.200"/>
    <text class="wx" x="946" y="754" textLength="29">27°C</text><text class="wx" x="984" y="754" textLength="86.500">Mostly cloudy</text>
    <g fill="none" stroke="#fff" stroke-width="1.200"><path d="M1087 751.500l6-6 6 6" stroke-width="1.500"/><path d="M1109.500 745.500h2.500l4-3.500v12.500l-4-3.500h-2.500zM1118 745.500q2 2.500 0 5.500M1120.500 743.500q3.500 4.500 0 9.500M1123 741.500q4.500 6.500 0 13"/></g>
    <path d="M1135 741c6-2 14 5 13 12-3 3-15-4-13-12z" fill="#151515" stroke="#aaa" stroke-width=".8"/><path d="M1134 753l3-4 5 2 2 3-9 1zM1133 746h3v3h-3z" fill="#ddd"/>
    <g fill="none" stroke="#ddd" stroke-width="1.100"><path d="M1160 753.500c1-6 5-10 12-10.500M1163 754c1-5 4-8 9-8M1166 754.500c1-4 3-5.500 6-5.500"/><circle cx="1170.500" cy="753.500" r="1.300" fill="#fff"/></g>
    <path d="M1182 753c-3-5 2-7 4-7 2-5 8-3 9 0 2 0 3 2 2 5l-2 2z" fill="#e2e2e2"/><circle cx="1192" cy="751" r="4.700" fill="#777"/><path d="M1190.500 748.500v5M1193.500 748.500v5" stroke="#fff" stroke-width="1.200"/>
    <g fill="none" stroke="#fff" stroke-width="1.200"><path d="M1208.500 744.500h6.500v7.500h-6.500zM1215 747l3.500-2v6.500l-3.500-2M1208 741.500q4-2 8 0M1208 755q4 2 8 0"/><path d="M1234 744.500h9.500v7.500h-12M1244.500 747v3"/><path d="M1229.500 741.500v3M1233.500 741.500v3M1228.500 744.500h6v2q-3 3-6 0zM1231.500 748.500v4"/></g>
    <text class="clk" x="1256.500" y="743" textLength="49">10:35 AM</text><text class="clk" x="1255" y="761" textLength="52.500">8/20/2022</text>
    <path d="M1325 740h16v13h-11v4l-4-4h-1z" fill="#fff"/><path d="M1328 743.500h10M1328 746.500h10M1328 749.500h7" stroke="#222"/><circle cx="1341" cy="755.500" r="8" fill="#333536" stroke="#8a8a8a"/><text class="six" x="1337.700" y="760">6</text>
    <path d="M1361.500 728v40" stroke="#777"/>
  </svg>
</footer>
</div>
</body>
</html>
```
FILE: styles.css
```css
* { box-sizing: border-box; }
body { margin: 0; font-family: "Open Sans", "Noto Sans", sans-serif; color: #252423; }
ul { margin: 0; padding: 0; list-style: none; }
svg { display: block; flex: none; }
.app { width: 1366px; height: 768px; display: flex; flex-direction: column; overflow: hidden; background: #f3f2f1; }

/* title bar */
.titlebar { height: 34px; flex: none; background: #3b3a39; color: #fff; display: flex; align-items: center; }
.doc-title { margin-left: 62px; width: 352px; font-size: 11.900px; letter-spacing: -.25px; white-space: nowrap; padding-top: 3px; }
.top-search { width: 468px; height: 24px; background: #cfcdcb; border-radius: 2px; display: flex; align-items: center; padding-left: 17px; gap: 10px; font-size: 13.300px; letter-spacing: -.15px; color: #2b4163; }
.sign { margin-left: 165px; width: 46px; font-size: 12px; letter-spacing: -.2px; padding-top: 1px; white-space: nowrap; }
.avatar { width: 16px; height: 16px; border-radius: 50%; background: #f3f2f1; }
.win { margin-left: auto; }

/* menu */
.menu { height: 32px; flex: none; display: flex; font-size: 13.300px; letter-spacing: -.1px; padding-left: 23px; line-height: 32px; }
.menu span { white-space: nowrap; height: 31px; }
.m-file { width: 58px; }
.m-home { width: 38px; margin-right: 31px; font-weight: 600; letter-spacing: -.2px; border-bottom: 3px solid #f2c811; }
.m-insert { width: 67px; }
.m-model { width: 90px; }
.m-view { width: 61px; }

/* ribbon */
.ribbon { height: 94px; flex: none; display: flex; padding-top: 4px; position: relative; z-index: 2; box-shadow: 0 1px 3px rgba(0,0,0,.28); background: #f3f2f1; }
.group { height: 88px; border-right: 1px solid #c8c6c4; display: flex; flex-direction: column; justify-content: space-between; }
.g-clip { width: 161px; }
.g-data { width: 356px; padding-left: 4px; }
.g-query { width: 116px; padding-left: 9px; }
.g-insert { width: 148px; padding-left: 8px; }
.g-calc { width: 115px; padding-left: 8px; }
.g-sens { width: 74px; }
.g-share { width: 59px; }
.btns, .clip { display: flex; }
.btn { display: flex; flex-direction: column; align-items: center; font-size: 11.700px; letter-spacing: -.3px; line-height: 16px; white-space: nowrap; padding-top: 1px; color: #333; }
.ico { width: 34px; height: 35px; }
.btn.off { color: #a8a6a4; }
.w-paste { width: 51px; padding-left: 4px; }
.w33 { width: 33px; } .w39 { width: 39px; } .w41 { width: 41px; } .w46 { width: 46px; } .w47 { width: 47px; } .w48 { width: 48px; }
.w49 { width: 49px; } .w50 { width: 50px; } .w54 { width: 54px; } .w57 { width: 57px; } .w58 { width: 58px; } .w60 { width: 60px; } .w73 { width: 73px; }
.chev { display: inline-block; width: 4px; height: 4px; border: solid currentColor; border-width: 0 1.5px 1.5px 0; transform: rotate(45deg); margin: 0 1px 3px 4px; }
.chev.solo { margin: 0 0 3px; }
.clip-list li { display: flex; align-items: center; height: 24px; font-size: 11.900px; letter-spacing: -.3px; color: #b3b1af; white-space: nowrap; gap: 3px; }
.clip-list svg { width: 18px; height: 18px; }
.glabel { font-size: 9.400px; line-height: 12px; text-align: center; color: #3b3a39; margin-bottom: -2px; letter-spacing: -.05px; }
.g-data .glabel { margin-left: -4px; } .g-query .glabel { margin-left: -9px; } .g-insert .glabel, .g-calc .glabel { margin-left: -8px; }
.collapse { margin: 77px 5px 0 auto; }

/* main area */
.main { height: 544px; flex: none; display: flex; border-bottom: 1px solid #d9d7d5; }
.rail { width: 41px; border-right: 1px solid #dddbd9; }
.stage { width: 963px; display: flex; flex-direction: column; }
.stage-top { height: 508px; display: flex; background: #fff; }
.canvas { width: 931px; display: flex; border-right: 1px solid #a19f9d; }
.scroll { width: 8px; }
.thumb { height: 489px; background: #c8c8c8; border-radius: 4px; }
.filters { width: 32px; display: flex; flex-direction: column; align-items: center; }
.f-title { writing-mode: vertical-rl; font-size: 14px; font-weight: 600; line-height: 18px; margin-top: 6px; letter-spacing: .2px; }
.tabs { height: 35px; display: flex; font-size: 11.800px; letter-spacing: -.25px; line-height: 36px; }
.arrows { width: 40px; border-right: 1px solid #a19f9d; display: flex; align-items: center; justify-content: space-between; padding: 0 6px; }
.al, .ar { border: 4px solid transparent; }
.al { border-right: 5px solid #c3c1bf; border-left: 0; }
.ar { border-left: 5px solid #c3c1bf; border-right: 0; }
.tab { border-right: 1px solid #c8c6c4; text-align: center; white-space: nowrap; position: relative; }
.t1 { width: 138px; } .t2 { width: 79px; } .t3 { width: 107px; } .t4 { width: 89px; } .t5 { width: 62px; } .t6 { width: 195px; }
.active { background: #fff; border-bottom: 4px solid #f2c811; font-weight: 600; letter-spacing: -.2px; }
.active b { position: absolute; right: 4px; top: 4px; font-size: 11px; line-height: 12px; font-weight: 600; }
.add { width: 39px; height: 32px; margin-top: 2px; background: #f2c811; display: flex; align-items: center; justify-content: center; }

/* report text */
.headline { font: 700 23px "Liberation Sans", Arial, sans-serif; fill: #e667b6; stroke: #e667b6; stroke-width: 1px; }
.v-title { font: 11.500px Roboto, sans-serif; fill: #252423; }
.lead { fill: none; stroke: #c4c4c4; stroke-width: 1; }
.detail { font-size: 8.300px; fill: #777; }
.legend { font-size: 8.800px; fill: #605e5c; }
.lt { font-weight: 600; fill: #555; }
.c-name { font: 400 9.800px Roboto, sans-serif; fill: #2f80fa; }
.c-val { font-size: 10.800px; fill: #252423; }
.c-sub { font-size: 10.800px; fill: #666; }
.f-pct { font-size: 9px; fill: #605e5c; }
.f-name { font-size: 9.300px; font-weight: 600; fill: #252423; }
.f-val { font-size: 9px; font-weight: 600; fill: #fff; fill-opacity: .9; }
.t-lab { font-size: 8.800px; font-weight: 600; fill: #fff; fill-opacity: .88; }
.big { font: 400 38px Roboto, sans-serif; fill: #252423; stroke: #252423; stroke-width: .5px; }
.big-sub { font-size: 10.500px; fill: #605e5c; }

/* visualizations pane */
.viz, .fields { border-left: 1px solid #e1dfdd; width: 181px; display: flex; flex-direction: column; }
.pane-head { height: 38px; display: flex; align-items: center; justify-content: space-between; font-size: 15.200px; font-weight: 600; letter-spacing: -.15px; padding: 0 8px; }
.build { font-size: 11.500px; font-weight: 600; letter-spacing: -.15px; padding-left: 8px; line-height: 16px; height: 19px; }
.modes { display: flex; gap: 32px; padding-left: 8px; height: 36px; }
.mode { width: 32px; height: 32px; border-radius: 2px; }
.mode.on { background: #d2d0ce; }
.notch { margin-bottom: 13px; }
.icons { display: grid; grid-template-columns: repeat(6, 18px); grid-auto-rows: 18px; gap: 10px; padding-left: 11px; height: 198px; }
.icons svg { width: 18px; height: 18px; overflow: visible; }
.a { fill: none; stroke: #3b3a39; }
.wf { fill: #fff; }
.w { fill: #fff; stroke: #4b4a49; }
.b { fill: #83bcea; stroke: #0063b1; }
.g { fill: #c8c6c4; stroke: #797775; }
.gl { fill: none; stroke: #8a8886; }
.bl { fill: none; stroke: #1b7fc4; stroke-width: 1.200; }
.n123 { font-size: 8px; fill: #1b7fc4; font-weight: 600; }
.scr { font-size: 16px; font-weight: 700; fill: #2484c6; }
.wells { border-top: 1px solid #dddbd9; font-size: 11.800px; letter-spacing: -.2px; padding: 0 6px 0 4px; line-height: 16px; margin-top: -1px; }
.lab { padding-left: 8px; }
.l-values { padding-top: 9px; height: 30px; }
.drop { border: 1px dashed #c8c6c4; background: #fff; white-space: nowrap; }
.d1 { height: 28px; line-height: 27px; padding-left: 10px; }
.l-drill { font-weight: 600; padding-top: 10px; height: 34px; color: #3b3a39; }
.row { height: 27px; padding-left: 8px; display: flex; justify-content: space-between; align-items: flex-start; }
.r1 { margin-top: 1px; }
.toggle { width: 32px; height: 16px; border: 1px solid #605e5c; border-radius: 8px; background: #fff; display: flex; align-items: center; gap: 2px; font-size: 9.500px; padding-left: 4px; color: #605e5c; line-height: 14px; }
.toggle::before { content: ""; width: 8px; height: 8px; border-radius: 50%; background: #605e5c; }
.toggle.on { background: #605e5c; color: #fff; font-weight: 600; }
.toggle.on::before { order: 2; background: #fff; }
.d2 { height: 26px; line-height: 26px; padding-left: 8px; letter-spacing: -.15px; }

/* fields pane */
.fsearch { width: 172px; height: 27px; margin: 7px 0 0 4px; border: 1px solid #605e5c; border-radius: 2px; background: #fff; display: flex; align-items: center; gap: 5px; padding-left: 7px; font-size: 12.500px; color: #444; }
.orders { display: flex; align-items: center; gap: 4px; margin-top: 13px; padding-left: 9px; font-size: 11.800px; letter-spacing: -.2px; color: #3b3a39; }

/* status bar */
.status { height: 24px; flex: none; display: flex; justify-content: space-between; align-items: center; background: #f3f2f1; border-bottom: 1px solid #fff; }
.page { font-size: 11.800px; padding-left: 5px; color: #3b3a39; letter-spacing: -.1px; }
.zoomtxt { font-size: 11.500px; fill: #605e5c; stroke: none; }

/* taskbar */
.taskbar { height: 40px; flex: none; display: flex; background: linear-gradient(90deg, #1f2224 0, #1f2224 48px, #38241e 392px, #32231e 440px, #232323 485px, #2e2e2f 550px, #454444 630px, #3e3d3d 690px, #222325 760px, #1e2022 100%); }
.start { width: 48px; display: flex; align-items: center; justify-content: center; }
.tsearch { width: 344px; background: #f1f1f1; border: 1px solid #c0c0c0; display: flex; align-items: center; padding-left: 11px; gap: 10px; font-size: 14px; letter-spacing: -.05px; color: #333; white-space: nowrap; }
.palace { margin-left: auto; }
.wx { font-size: 13.500px; fill: #fff; }
.clk { font-size: 11.500px; fill: #fff; }
.six { font-size: 11px; font-weight: 600; fill: #fff; }
```
